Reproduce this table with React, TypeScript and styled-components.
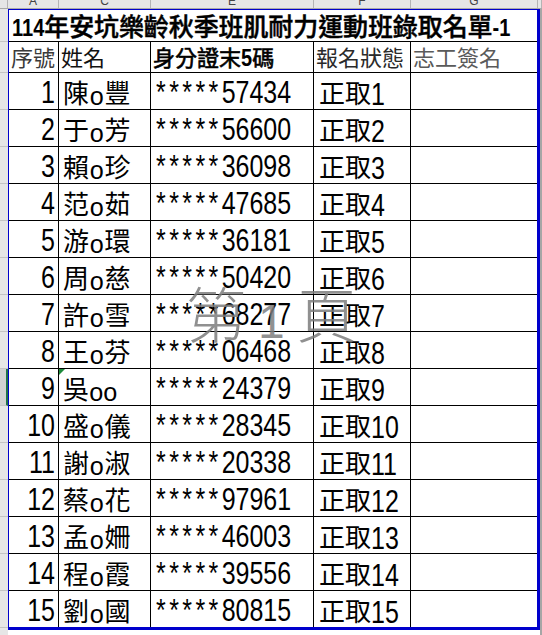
import React from 'react';
import styled, { createGlobalStyle } from 'styled-components';

const GlobalStyle = createGlobalStyle`
  html, body { margin: 0; padding: 0; background: #ffffff; }
  #root { width: 542px; height: 635px; overflow: hidden; }
`;

const LAT = `"Liberation Sans", Arial, sans-serif`;
const HAN = `"Noto Sans CJK TC", "Noto Sans CJK SC", sans-serif`;
const BLUE = '#0000cc';

const Sheet = styled.div`
  width: 542px;
  height: 635px;
  display: grid;
  grid-template-columns: 8px 532px 2px;
  grid-template-rows: 9px 621px 5px;
  background: #ffffff;
  overflow: hidden;
`;

const ColHeader = styled.div`
  grid-column: 1 / -1;
  grid-row: 1;
  display: flex;
  background: #e6e6e6;
  border-bottom: 1px solid #a9a9a9;
  box-sizing: border-box;
  overflow: hidden;
`;

const ColCell = styled.div<{ $w: number }>`
  width: ${(p) => p.$w}px;
  flex: none;
  box-sizing: border-box;
  border-right: 1px solid #b4b4b4;
  display: flex;
  justify-content: center;
  align-items: flex-start;
  overflow: hidden;
`;

const ColLabel = styled.span`
  font-family: ${LAT};
  font-size: 12px;
  line-height: 12px;
  color: #444;
  margin-top: -5px;
`;

const RowHeader = styled.div`
  grid-column: 1;
  grid-row: 2 / 4;
  display: flex;
  flex-direction: column;
  background: #e6e6e6;
`;

const RowHeadCell = styled.div<{ $h: number; $sel?: boolean }>`
  height: ${(p) => p.$h}px;
  flex: none;
  box-sizing: border-box;
  border-bottom: 1px solid #c4c4c4;
  background: ${(p) => (p.$sel ? '#d2d2d2' : '#e6e6e6')};
  border-right: ${(p) => (p.$sel ? '2px solid #217346' : '0')};
`;

const Gutter = styled.div`
  grid-column: 3;
  grid-row: 2 / 4;
  background: #a6a6a6;
`;

const Page = styled.div`
  grid-column: 2;
  grid-row: 2;
  position: relative;
  box-sizing: border-box;
  border-left: 1px solid ${BLUE};
  border-top: 1px solid ${BLUE};
  border-right: 3px solid ${BLUE};
  border-bottom: 3px solid ${BLUE};
`;

const Table = styled.div`
  display: grid;
  grid-template-columns: 50px 92px 163px 97px 126px;
`;

const TitleCell = styled.div`
  grid-column: 1 / -1;
  height: 32px;
  box-sizing: border-box;
  border-bottom: 1px solid #000;
  padding: 3px 0 0 3px;
  line-height: 28px;
  font-family: ${LAT};
  font-size: 19px;
  color: #000;
  white-space: nowrap;
`;

const TitleLat = styled.span`
  display: inline-block;
  font-weight: 700;
  font-size: 20px;
  line-height: 20px;
  transform: scaleY(1.2);
  transform-origin: 50% 85%;
`;

const TitleHan = styled.span`
  font-family: ${HAN};
  font-size: 25px;
  font-weight: 500;
  line-height: 1;
  letter-spacing: -0.1px;
  -webkit-text-stroke: 0.45px #000;
`;

const HeadCell = styled.div<{ $last?: boolean; $tone: string; $bold?: boolean }>`
  height: 31px;
  box-sizing: border-box;
  border-bottom: 1px solid #000;
  border-right: ${(p) => (p.$last ? '0' : '1px solid #000')};
  padding: 0 0 0 2px;
  line-height: 29px;
  font-family: ${HAN};
  font-size: 22px;
  color: ${(p) => p.$tone};
  -webkit-text-stroke: ${(p) => (p.$bold ? '0.6px' : '0')} ${(p) => p.$tone};
  white-space: nowrap;
  overflow: hidden;
`;

const HeadLat = styled.span`
  display: inline-block;
  font-family: ${LAT};
  font-size: 20px;
  line-height: 20px;
  font-weight: 700;
  -webkit-text-stroke: 0;
  transform: scaleY(1.2);
  transform-origin: 50% 85%;
`;

const Cell = styled.div<{ $last?: boolean; $lastRow?: boolean; $right?: boolean; $pad: number }>`
  position: relative;
  height: ${(p) => (p.$lastRow ? 36 : 37)}px;
  box-sizing: border-box;
  border-bottom: ${(p) => (p.$lastRow ? '0' : '1px solid #000')};
  border-right: ${(p) => (p.$last ? '0' : '1px solid #000')};
  padding-top: 6px;
  padding-left: ${(p) => (p.$right ? 0 : p.$pad)}px;
  padding-right: ${(p) => (p.$right ? p.$pad : 0)}px;
  text-align: ${(p) => (p.$right ? 'right' : 'left')};
  line-height: 30px;
  font-family: ${LAT};
  font-size: 25px;
  color: #000;
  white-space: nowrap;
  overflow: hidden;
`;

const Lat = styled.span<{ $origin?: string }>`
  display: inline-block;
  font-size: 25px;
  line-height: 25px;
  transform: scaleY(1.25);
  transform-origin: ${(p) => p.$origin ?? '0% 85%'};
`;

const NameO = styled.span`
  display: inline-block;
  font-size: 24px;
  line-height: 24px;
  margin: 0 1px;
  transform: scale(1.05, 1.1);
  transform-origin: 50% 85%;
`;

const Han = styled.span`
  font-family: ${HAN};
  font-size: 26px;
  line-height: 1;
  vertical-align: 2px;
`;

const Mask = styled.span`
  letter-spacing: 3.4px;
`;

const ErrorMark = styled.span`
  position: absolute;
  left: 0;
  top: 0;
  width: 0;
  height: 0;
  border-top: 6px solid #1d8a3b;
  border-right: 6px solid transparent;
`;

const Watermark = styled.div`
  position: absolute;
  left: 177px;
  top: 272px;
  display: flex;
  align-items: baseline;
  gap: 12px;
  color: rgba(125, 125, 125, 0.85);
  pointer-events: none;
  white-space: nowrap;
`;

const WmHan = styled.span`
  font-family: ${HAN};
  font-size: 60px;
  font-weight: 300;
  line-height: 1;
`;

const WmNum = styled.span`
  font-family: ${LAT};
  font-size: 48px;
  line-height: 1;
`;

type Row = { no: number; sur: string; given: string; id: string };

const rows: Row[] = [
  { no: 1, sur: '陳', given: '豐', id: '57434' },
  { no: 2, sur: '于', given: '芳', id: '56600' },
  { no: 3, sur: '賴', given: '珍', id: '36098' },
  { no: 4, sur: '范', given: '茹', id: '47685' },
  { no: 5, sur: '游', given: '環', id: '36181' },
  { no: 6, sur: '周', given: '慈', id: '50420' },
  { no: 7, sur: '許', given: '雪', id: '68277' },
  { no: 8, sur: '王', given: '芬', id: '06468' },
  { no: 9, sur: '吳', given: '', id: '24379' },
  { no: 10, sur: '盛', given: '儀', id: '28345' },
  { no: 11, sur: '謝', given: '淑', id: '20338' },
  { no: 12, sur: '蔡', given: '花', id: '97961' },
  { no: 13, sur: '孟', given: '姍', id: '46003' },
  { no: 14, sur: '程', given: '霞', id: '39556' },
  { no: 15, sur: '劉', given: '國', id: '80815' },
];

const colHeads: { w: number; label: string }[] = [
  { w: 8, label: '' },
  { w: 51, label: 'A' },
  { w: 92, label: 'C' },
  { w: 163, label: 'E' },
  { w: 97, label: 'F' },
  { w: 127, label: 'G' },
  { w: 4, label: '' },
];

const rowHeads: { h: number; sel?: boolean }[] = [
  { h: 33 },
  { h: 31 },
  ...rows.map((r) => ({ h: 37, sel: r.no === 9 })),
  { h: 40 },
];

export default function App() {
  return (
    <>
      <GlobalStyle />
      <Sheet>
        <ColHeader>
          {colHeads.map((c, i) => (
            <ColCell key={i} $w={c.w}>
              {c.label && <ColLabel>{c.label}</ColLabel>}
            </ColCell>
          ))}
        </ColHeader>
        <RowHeader>
          {rowHeads.map((r, i) => (
            <RowHeadCell key={i} $h={r.h} $sel={r.sel} />
          ))}
        </RowHeader>
        <Page>
          <Table>
            <TitleCell>
              <TitleLat>114</TitleLat>
              <TitleHan>年安坑樂齡秋季班肌耐力運動班錄取名單</TitleHan>
              <TitleLat>-1</TitleLat>
            </TitleCell>
            <HeadCell $tone="#3a3a3a">序號</HeadCell>
            <HeadCell $tone="#111">姓名</HeadCell>
            <HeadCell $tone="#000" $bold>
              身分證末<HeadLat>5</HeadLat>碼
            </HeadCell>
            <HeadCell $tone="#2a2a2a">報名狀態</HeadCell>
            <HeadCell $tone="#5a5a5a" $last>
              志工簽名
            </HeadCell>
            {rows.map((r, i) => {
              const lastRow = i === rows.length - 1;
              return (
                <React.Fragment key={r.no}>
                  <Cell $right $pad={3} $lastRow={lastRow}>
                    <Lat $origin="100% 85%">{r.no}</Lat>
                  </Cell>
                  <Cell $pad={4} $lastRow={lastRow}>
                    {r.no === 9 && <ErrorMark />}
                    <Han>{r.sur}</Han>
                    <NameO>{r.given ? 'o' : 'oo'}</NameO>
                    {r.given && <Han>{r.given}</Han>}
                  </Cell>
                  <Cell $pad={5} $lastRow={lastRow}>
                    <Lat>
                      <Mask>*****</Mask>
                      {r.id}
                    </Lat>
                  </Cell>
                  <Cell $pad={5} $lastRow={lastRow}>
                    <Han>正取</Han>
                    <Lat>{r.no}</Lat>
                  </Cell>
                  <Cell $pad={5} $last $lastRow={lastRow} />
                </React.Fragment>
              );
            })}
          </Table>
          <Watermark>
            <WmHan>第</WmHan>
            <WmNum>1</WmNum>
            <WmHan>頁</WmHan>
          </Watermark>
        </Page>
        <Gutter />
      </Sheet>
    </>
  );
}
